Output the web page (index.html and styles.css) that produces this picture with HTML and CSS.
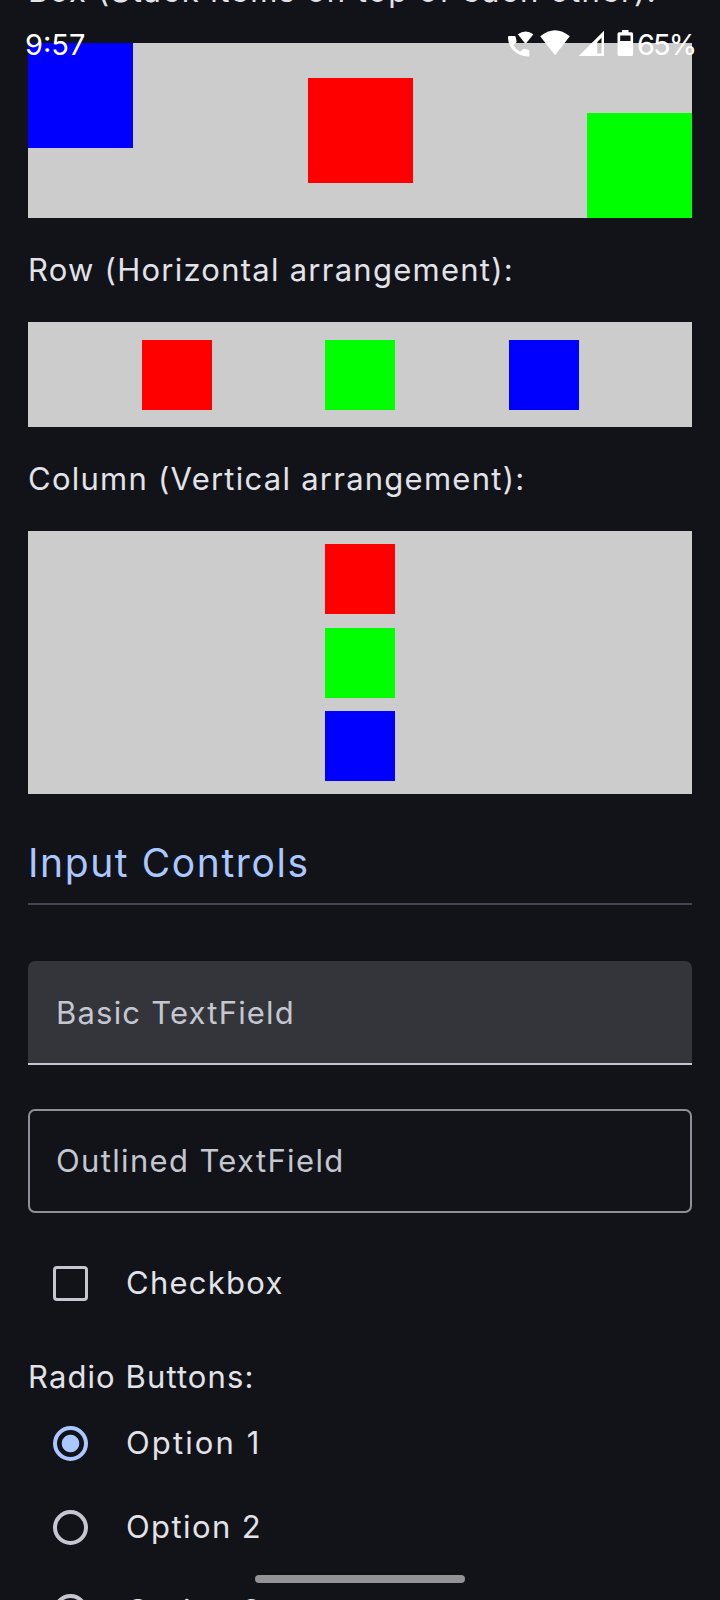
FILE: index.html
```html
<!DOCTYPE html>
<html lang="en">
<head>
<meta charset="utf-8">
<title>Components</title>
<link rel="stylesheet" href="styles.css">
</head>
<body>
<div class="screen">
  <header class="status-bar">
    <span class="clock">9:57</span>
    <div class="status-right">
      <svg class="status-icons" width="128" height="28" viewBox="507 30 128 28" fill="#fff">
        <path d="M509 36h5.500q1 0 1.200 1l.9 4.300q.1.800-.5 1.400l-2.600 2.500q2.400 4.400 6.800 6.500l2.600-2.500q.6-.6 1.400-.4l4.100.9q1 .3 1 1.200v4.500q0 1-1 1C517 56.400 508 48 508 37q0-1 1-1Z"/>
        <path d="M517.800 34.300q7.800-5.700 15.600 0L525.600 44Z"/>
        <path d="M540.200 36.200q14.800-12 29.600 0L555 55.300Z"/>
        <path fill-rule="evenodd" d="M578.800 56 604 30.800V56ZM597.300 42v11.500h4.200V37.800Z"/>
        <path fill-rule="evenodd" d="M622 30h6.500v2.300h3q1.600 0 1.600 1.600v20.500q0 1.600-1.600 1.600h-12.400q-1.600 0-1.600-1.600V33.900q0-1.600 1.600-1.600h2.900ZM620.200 35.500V41h10.300v-5.500Z"/>
      </svg>
      <span class="battery-level">65%</span>
    </div>
  </header>

  <main class="content">
    <p class="label label-box">Box (Stack items on top of each other):</p>
    <div class="demo demo-box">
      <div class="tile blue large start"></div>
      <div class="tile red large center"></div>
      <div class="tile green large end"></div>
    </div>

    <p class="label spaced">Row (Horizontal arrangement):</p>
    <div class="demo demo-row">
      <div class="tile red"></div>
      <div class="tile green"></div>
      <div class="tile blue"></div>
    </div>

    <p class="label spaced">Column (Vertical arrangement):</p>
    <div class="demo demo-column">
      <div class="tile red"></div>
      <div class="tile green"></div>
      <div class="tile blue"></div>
    </div>

    <h2 class="section-title">Input Controls</h2>
    <div class="field filled">Basic TextField</div>
    <div class="field outlined">Outlined TextField</div>

    <div class="choice checkbox-row"><span class="checkbox"></span><span>Checkbox</span></div>

    <p class="label radio-label">Radio Buttons:</p>
    <div class="choice"><span class="radio selected"></span><span class="option-one">Option 1</span></div>
    <div class="choice"><span class="radio"></span><span class="option">Option 2</span></div>
    <div class="choice"><span class="radio"></span><span class="option">Option 3</span></div>
  </main>

  <div class="nav-handle"></div>
</div>
</body>
</html>
```
FILE: styles.css
```css
* { box-sizing: border-box; }

body {
  margin: 0;
  background: #111318;
  color: #e2e2e9;
  font-family: Inter, "Liberation Sans", sans-serif;
  font-size: 31px;
  letter-spacing: 1.25px;
}

.screen {
  position: relative;
  width: 720px;
  height: 1600px;
  overflow: hidden;
}

/* System status bar, drawn over the scrolled content */
.status-bar {
  position: absolute;
  z-index: 2;
  top: 26px;
  left: 25px;
  right: 24px;
  height: 36px;
  display: flex;
  justify-content: space-between;
  color: #fff;
  font-size: 29px;
  line-height: 37px;
  letter-spacing: 0;
}

.status-right { display: flex; }
.status-icons { margin-top: 4px; }
.battery-level {
  width: 59px;
  margin-left: 2px;
  letter-spacing: -1.9px;
  white-space: nowrap;
}

.content {
  margin-top: -33px;
  padding: 0 28px;
}

.label {
  margin: 0;
  line-height: 48px;
  white-space: nowrap;
}
.label.spaced { margin: 28px 0; }
.label-box {
  margin-bottom: 28px;
  letter-spacing: 1.47px;
}

/* Arrangement demos */
.demo {
  display: flex;
  background: #ccc;
}
.demo-box {
  display: grid;
  height: 175px;
}
.demo-row {
  height: 105px;
  align-items: center;
  justify-content: space-evenly;
}
.demo-column {
  height: 263px;
  flex-direction: column;
  align-items: center;
  justify-content: space-evenly;
}

.tile { width: 70px; height: 70px; }
.large { width: 105px; height: 105px; grid-area: 1 / 1; }
.start { place-self: start; }
.center { place-self: center; }
.end { place-self: end; }
.red { background: #f00; }
.green { background: #0f0; }
.blue { background: #00f; }

.section-title {
  margin: 40px 0 56px;
  padding-bottom: 12px;
  border-bottom: 2px solid #44474f;
  color: #aac7ff;
  font-size: 39px;
  font-weight: 400;
  line-height: 57px;
  letter-spacing: 1.6px;
}

/* Text fields */
.field {
  height: 104px;
  padding-left: 28px;
  color: #c4c6d0;
}
.filled {
  background: #33353a;
  border-bottom: 2px solid #c4c6d0;
  border-radius: 7px 7px 0 0;
  line-height: 103px;
  letter-spacing: 1.2px;
}
.outlined {
  margin-top: 44px;
  padding-left: 26px;
  border: 2px solid #8e9099;
  border-radius: 7px;
  line-height: 100px;
  letter-spacing: 1.35px;
}

/* Checkbox and radio rows */
.choice {
  display: flex;
  height: 84px;
  padding-left: 25px;
  line-height: 84px;
}
.checkbox-row { margin-top: 28px; }
.checkbox,
.radio {
  flex: none;
  width: 35px;
  height: 35px;
  margin: 25px 38px 0 0;
}
.checkbox {
  border: 3px solid #c4c6d0;
  border-radius: 4px;
}
.radio {
  border: 4px solid #c4c6d0;
  border-radius: 50%;
}
.selected {
  border-color: #aac7ff;
  background: radial-gradient(circle, #aac7ff 8.3px, transparent 9.2px);
}
.radio-label {
  margin-top: 28px;
  letter-spacing: 1.1px;
}
.option { letter-spacing: 1.4px; }
.option-one { letter-spacing: 2.1px; }

/* Gesture navigation handle */
.nav-handle {
  position: absolute;
  left: 255px;
  bottom: 17px;
  width: 210px;
  height: 8px;
  border-radius: 4px;
  background: #939396;
}
```
